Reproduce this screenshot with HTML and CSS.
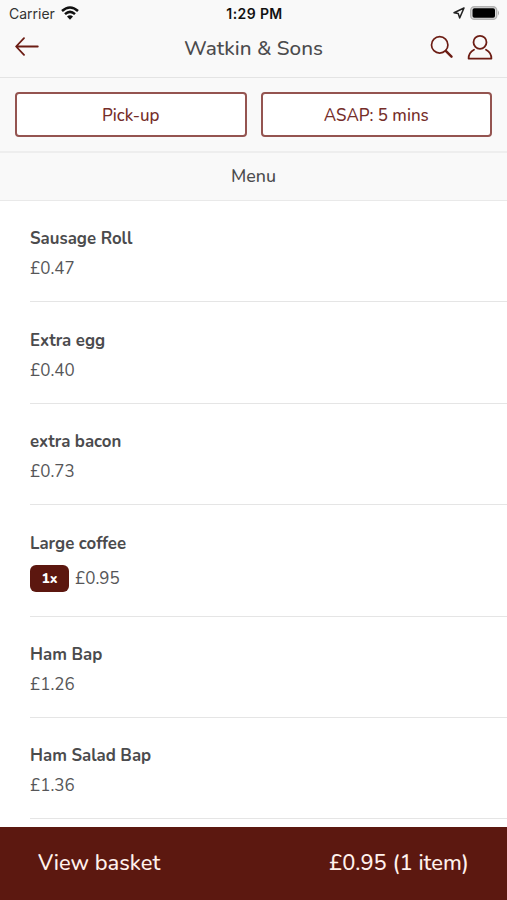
FILE: index.html
```html
<!DOCTYPE html>
<html lang="en">
<head>
<meta charset="utf-8">
<title>Watkin &amp; Sons</title>
<link rel="stylesheet" href="styles.css">
</head>
<body>
<div class="app">
  <header class="header">
    <div class="status">
      <div class="status-left">
        <span class="carrier">Carrier</span>
        <svg width="18" height="14" viewBox="0 0 18 14" fill="none" stroke="#111" stroke-width="2.5"><path d="M1 5Q9-2 17 5M4 8.2q5-4.6 10 0"/><path d="M6 10.6q3-2.7 6 0L9 13.8z" fill="#111" stroke="none"/></svg>
      </div>
      <span class="time">1:29 PM</span>
      <div class="status-right">
        <svg width="12" height="12" viewBox="0 0 12 12" fill="none" stroke="#222" stroke-width="1.5" stroke-linejoin="round"><path d="M11 1 1 5.7l4.2.8 1.5 4.4z"/></svg>
        <svg width="30" height="14" viewBox="0 0 30 14"><rect x=".7" y=".7" width="26" height="12.6" rx="3.6" fill="#ddd" stroke="#b3b3b3" stroke-width="1.4"/><rect x="2.5" y="2.3" width="22.5" height="9.4" rx="1.8" fill="#000"/><path d="M28 4.5q2 2.5 0 5z" fill="#aaa"/></svg>
      </div>
    </div>
    <div class="nav">
      <svg width="24" height="19" viewBox="0 0 24 19" fill="none" stroke="#6c1d14" stroke-width="1.8" stroke-linecap="round" stroke-linejoin="round"><path d="M22.8 9.5H1.3M9 1.1 1.1 9.5 9 17.9"/></svg>
      <h1 class="title">Watkin &amp; Sons</h1>
      <div class="actions">
        <svg width="24" height="26" viewBox="0 0 24 26" fill="none" stroke="#6c1d14" stroke-linecap="round"><circle cx="9.7" cy="10.9" r="8.2" stroke-width="1.7"/><path d="m16 17.2 5.5 5.4" stroke-width="2.5"/></svg>
        <svg width="26" height="26" viewBox="0 0 26 26" fill="none" stroke="#6c1d14" stroke-width="1.8" stroke-linecap="round" stroke-linejoin="round"><circle cx="13" cy="8.3" r="6.5"/><path d="M7 15.8C3.3 17.8 1.6 20.6 1.6 24.6h22.8c0-4-1.7-6.8-5.4-8.8"/></svg>
      </div>
    </div>
  </header>
  <div class="options">
    <button class="option">Pick-up</button>
    <button class="option">ASAP: 5 mins</button>
  </div>
  <h2 class="menu-heading">Menu</h2>
  <main class="list">
    <section class="item"><h3 class="name">Sausage Roll</h3><p class="price">£0.47</p></section>
    <section class="item"><h3 class="name">Extra egg</h3><p class="price">£0.40</p></section>
    <section class="item"><h3 class="name">extra bacon</h3><p class="price">£0.73</p></section>
    <section class="item selected"><h3 class="name">Large coffee</h3><p class="price"><span class="count">1x</span><span>£0.95</span></p></section>
    <section class="item"><h3 class="name">Ham Bap</h3><p class="price">£1.26</p></section>
    <section class="item"><h3 class="name">Ham Salad Bap</h3><p class="price">£1.36</p></section>
  </main>
  <footer class="basket"><span>View basket</span><span>£0.95 (1 item)</span></footer>
</div>
</body>
</html>
```
FILE: styles.css
```css
* { box-sizing: border-box; }
body {
  margin: 0;
  background: #fff;
  color: #4b4b4d;
  font-family: "Nunito", "Noto Sans", sans-serif;
}
h1, h2, h3, p { margin: 0; font-weight: 500; }
svg { display: block; flex: none; }
.app {
  display: flex;
  flex-direction: column;
  height: 900px;
  overflow: hidden;
}
.header {
  flex: none;
  height: 78px;
  background: #f9f9f9;
  border-bottom: 1px solid #e4e4e4;
}
.status {
  display: grid;
  grid-template-columns: 1fr auto 1fr;
  align-items: center;
  height: 26px;
  padding: 0 7px 0 9px;
  font-family: Inter, sans-serif;
  font-size: 14px;
  color: #333;
}
.status-left { display: flex; align-items: center; gap: 6px; }
.status-right { display: flex; align-items: center; justify-content: flex-end; gap: 5px; }
.carrier { padding-top: 1px; }
.time { font-weight: 600; font-size: 14px; letter-spacing: 0.4px; color: #111; }
.nav {
  display: grid;
  grid-template-columns: 1fr auto 1fr;
  align-items: center;
  height: 42px;
  padding: 0 14px;
}
.nav > svg { margin: 0 0 1px 1px; }
.title { font-size: 20.7px; line-height: 40px; padding-top: 1px; }
.actions { display: flex; justify-content: flex-end; gap: 13px; }
.options {
  flex: none;
  display: flex;
  gap: 14px;
  height: 75px;
  padding: 14px 15px 0;
  background: #f9f9f9;
  border-bottom: 2px solid #eee;
}
.option {
  flex: 1;
  height: 45px;
  padding: 2px 0 0;
  background: #fff;
  border: 2px solid #945450;
  border-radius: 4px;
  color: #752d29;
  font: 500 16.9px "Nunito", "Noto Sans", sans-serif;
}
.menu-heading {
  flex: none;
  height: 48px;
  background: #f9f9f9;
  border-bottom: 1px solid #e9e9e9;
  font-size: 17.8px;
  line-height: 46px;
  text-align: center;
}
.list { flex: 1; min-height: 0; overflow: hidden; padding-left: 30px; }
.item {
  height: 101.4px;
  padding-top: 25.4px;
  border-bottom: 1px solid #e5e5e5;
}
.name { font-size: 16.8px; font-weight: 700; line-height: 25px; }
.price {
  display: flex;
  align-items: center;
  height: 26px;
  margin-top: 4.6px;
  font-size: 17px;
  font-weight: 400;
  color: #565658;
}
.selected { height: 111.4px; }
.selected .price { gap: 6px; margin-top: 10px; }
.count {
  width: 39px;
  height: 27px;
  border-radius: 6px;
  background: #5c170f;
  color: #fff;
  font-size: 14px;
  font-weight: 800;
  line-height: 27px;
  text-align: center;
}
.basket {
  flex: none;
  display: flex;
  justify-content: space-between;
  height: 73px;
  padding: 0 38px;
  background: #5c1810;
  color: #fff1ec;
  font-size: 21.9px;
  font-weight: 500;
  line-height: 72px;
}
```
